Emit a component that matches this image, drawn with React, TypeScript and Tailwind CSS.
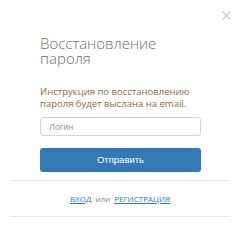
import React from "react";

export default function App() {
  return (
    <div className="relative w-[240px] h-[230px] bg-white font-['Open_Sans',sans-serif] overflow-hidden">
      <button className="absolute top-[10px] right-[9px] w-[10px] h-[10px] flex items-center justify-center">
        <svg width="9" height="9" viewBox="0 0 9 9">
          <path d="M0.5 0.5 L8.5 8.5 M8.5 0.5 L0.5 8.5" stroke="#c8c8c8" strokeWidth="1.1" />
        </svg>
      </button>
      <div className="pt-[36px] px-[40px] pr-[39px]">
        <h2 className="text-[15px] leading-[15px] font-light text-[#707070]">
          Восстановление
          <br />
          пароля
        </h2>
        <p className="mt-[20px] text-[9.5px] leading-[12px] text-[#8a6d3b]">
          Инструкция по восстановлению
          <br />
          пароля будет выслана на email.
        </p>
        <input
          placeholder="Логин"
          className="mt-[7px] block w-full h-[19px] border border-[#d4d4d4] rounded-[3px] px-[8px] text-[9px] font-['Liberation_Sans',sans-serif] placeholder:text-[#999] outline-none"
        />
        <button className="mt-[12px] w-full h-[24px] rounded-[3px] bg-[#337ab7] text-white text-[9.5px] font-['Liberation_Sans',sans-serif]">
          Отправить
        </button>
      </div>
      <div className="mx-[10px] mt-[8px] border-t border-[#e5e5e5]" />
      <div className="h-[35px] flex items-center justify-center gap-[4px] text-[8px] text-[#888]">
        <a className="text-[#337ab7] underline">ВХОД</a>
        <span>или</span>
        <a className="text-[#337ab7] underline">РЕГИСТРАЦИЯ</a>
      </div>
      <div className="mx-[10px] border-t border-[#e5e5e5]" />
    </div>
  );
}
